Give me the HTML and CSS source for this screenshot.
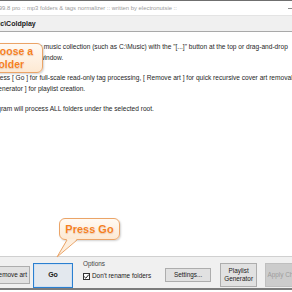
FILE: index.html
```html
<!DOCTYPE html>
<html lang="en">
<head>
    <meta charset="UTF-8">
    <title>mp3 folders normalizer</title>
    <link rel="stylesheet" href="styles.css">
</head>
<body>
<div class="window">
    <div class="titlebar">
        <span class="title">mp3fn v1.2.99.8 pro :: mp3 folders &amp; tags normalizer :: written by electronutsie ::</span>
        <span class="controls"><i class="min"></i><i class="max"></i><i class="close"></i></span>
    </div>
    <div class="pathbar"><span class="path">C:\Music\Coldplay</span></div>
    <div class="content">
        <p>Pick the root folder of your music collection (such as C:\Music) with the "[...]" button at the top or drag-and-drop<br>your folder onto the main window.</p>
        <p>Then just press [ Go ] for full-scale read-only tag processing, [ Remove art ] for quick recursive cover art removal, or<br>[&nbsp; Playlist Generator ] for playlist creation.</p>
        <p>So, the program will process ALL folders under the selected root.</p>

        <div class="callout callout-folder">Choose a<br>folder</div>
        <div class="callout callout-go">
            Press Go
            <svg class="tail" width="24" height="20" viewBox="0 0 24 20">
                <polygon points="12,0 22,0 2,18" fill="#fdeedd"/>
                <polyline points="12,1 2,18 22,1" fill="none" stroke="#eba467" stroke-width="1"/>
            </svg>
        </div>
    </div>
    <div class="bottombar">
        <button class="btn btn-remove">Remove art</button>
        <button class="btn btn-go">Go</button>
        <div class="options">
            <span class="options-title">Options</span>
            <label class="check">
                <span class="box">
                    <svg width="7" height="7" viewBox="0 0 7 7"><polyline points="1.2,3.6 2.8,5.2 5.8,1.6" fill="none" stroke="#222" stroke-width="1"/></svg>
                </span>
                Don't rename folders
            </label>
        </div>
        <button class="btn btn-settings">Settings...</button>
        <button class="btn btn-playlist">Playlist<br>Generator</button>
        <button class="btn btn-apply" disabled>Apply Changes</button>
    </div>
</div>
</body>
</html>
```

FILE: styles.css
```css
*{
    margin: 0;
    padding: 0;
    box-sizing: border-box;
}
body{
    width: 292px;
    height: 292px;
    overflow: hidden;
    background: #fff;
    font-family: "Liberation Sans", Arial, sans-serif;
}
.window{
    width: 400px;
    margin-left: -43px;
    border-top: 1px solid #6f6f6f;
}

/* title */
.titlebar{
    height: 14px;
    display: flex;
    align-items: center;
    padding-left: 11px;
    font-size: 5.9px;
    color: #9a9a9a;
    white-space: nowrap;
}
.controls{
    display: flex;
    align-items: center;
    gap: 12px;
    margin-left: auto;
    width: 69px;
}
.controls i{
    display: block;
}
.min{
    width: 5px;
    height: 1px;
    background: #8a8a8a;
}
.max{
    width: 5px;
    height: 5px;
    border: 1px solid #8a8a8a;
}
.close{
    width: 5px;
    height: 1px;
    background: #8a8a8a;
    transform: rotate(45deg);
}

/* path */
.pathbar{
    height: 17px;
    display: flex;
    align-items: center;
    padding-left: 18px;
    background: #f0f0f0;
    border-top: 1px solid #e4e4e4;
    border-bottom: 1px solid #a9a9a9;
    font-size: 7px;
    font-weight: bold;
    color: #1a1a1a;
    white-space: nowrap;
}

/* text */
.content{
    position: relative;
    height: 224px;
    padding: 9px 0 0 8px;
    font-size: 6.6px;
    line-height: 11px;
    color: #262626;
    white-space: nowrap;
}
.content p{
    margin-bottom: 9px;
}

/* callouts */
.callout{
    position: absolute;
    display: flex;
    align-items: center;
    justify-content: center;
    text-align: center;
    font-weight: bold;
    color: #f5801e;
    text-shadow: 0 0 1px #fff, 0 1px 1px rgba(150,70,0,.25);
    background: linear-gradient(#fffaf4, #fde9d3);
    border: 1px solid #eba467;
    border-radius: 6px;
    box-shadow: 1px 1px 2px rgba(0,0,0,.18);
}
.callout-folder{
    left: 19px;
    top: 11px;
    width: 67px;
    height: 30px;
    font-size: 10.5px;
    line-height: 13px;
}
.callout-go{
    left: 102px;
    top: 186px;
    width: 61px;
    height: 22px;
    font-size: 11px;
}
.tail{
    position: absolute;
    left: -5px;
    top: 20px;
}

/* bottom */
.bottombar{
    height: 34px;
    display: flex;
    align-items: center;
    padding: 5px 0 0 34px;
    background: #f0f0f0;
    border-top: 1px solid #d0d0d0;
    border-bottom: 2px solid #7c7c7c;
}
.btn{
    font-family: inherit;
    font-size: 6.4px;
    line-height: 8px;
    color: #1a1a1a;
    background: #e1e1e1;
    border: 1px solid #adadad;
    white-space: nowrap;
}
.btn-remove{
    width: 39px;
    height: 18px;
}
.btn-go{
    width: 40px;
    height: 25px;
    margin-left: 3px;
    font-size: 7px;
    font-weight: bold;
    background: #e3e8ee;
    border-color: #2a7fd0;
    box-shadow: inset 0 0 0 1px #cfe0f2;
}
.options{
    align-self: flex-start;
    margin: -2px 0 0 10px;
    display: flex;
    flex-direction: column;
    gap: 5px;
    font-size: 6.4px;
    color: #1a1a1a;
}
.options-title{
    line-height: 7px;
    color: #444;
}
.check{
    display: flex;
    align-items: center;
    gap: 2px;
    line-height: 8px;
    white-space: nowrap;
}
.box{
    display: flex;
    width: 7px;
    height: 7px;
    border: 1px solid #333;
    background: #fff;
}
.box svg{
    margin: -1px;
}
.btn-settings{
    width: 46px;
    height: 14px;
    margin-left: 14px;
}
.btn-playlist{
    width: 37px;
    height: 24px;
    margin-left: 9px;
}
.btn-apply{
    width: 48px;
    height: 24px;
    margin-left: 8px;
    background: #cccccc;
    border-color: #bfbfbf;
    color: #9c9c9c;
}
```
